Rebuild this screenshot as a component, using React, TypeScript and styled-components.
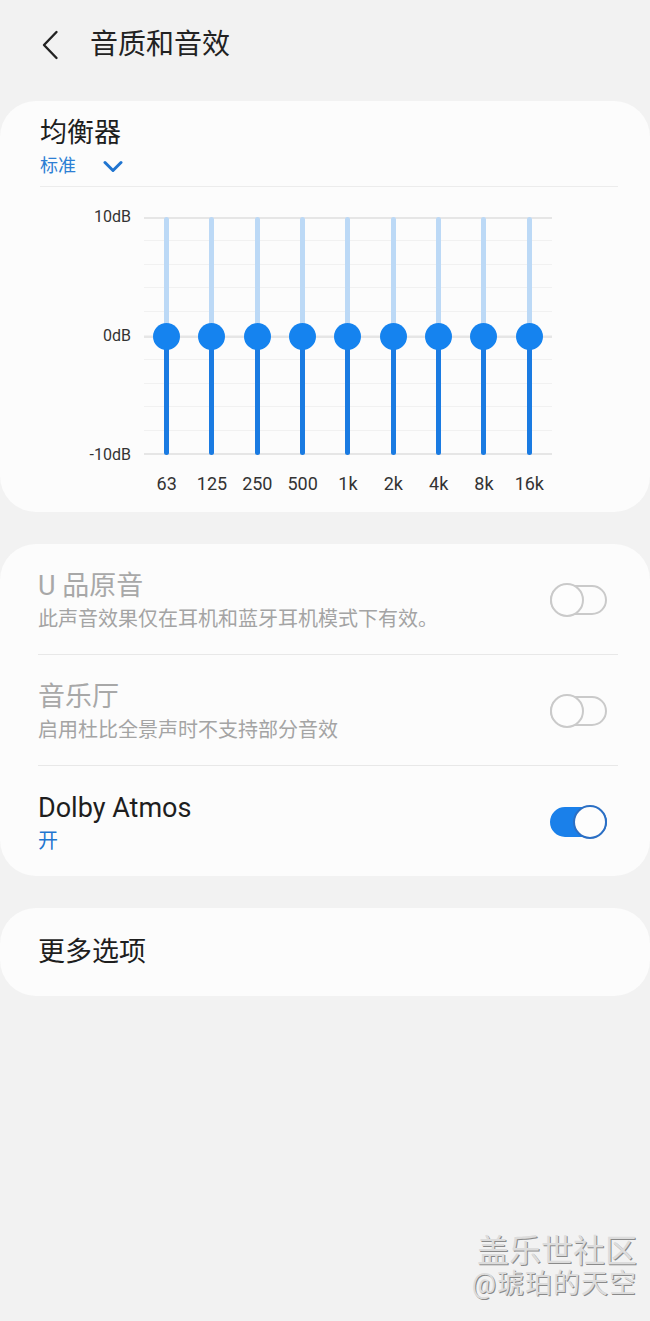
import styled, { createGlobalStyle } from 'styled-components';

const GlobalStyle = createGlobalStyle`
	html, body {
		margin: 0;
		padding: 0;
		background: #f2f2f2;
	}
	body {
		font-family: Roboto, "Noto Sans CJK SC", sans-serif;
		color: #222;
	}
`;

const Page = styled.div`
	position: relative;
	width: 650px;
	min-height: 1321px;
	background: #f2f2f2;
	overflow: hidden;
`;

const Header = styled.div`
	display: flex;
	align-items: center;
	height: 90px;
	padding-left: 41px;
	gap: 31px;
`;

const HeaderTitle = styled.div`
	font-size: 28px;
	line-height: 36px;
	color: #222;
`;

const Cards = styled.div`
	display: flex;
	flex-direction: column;
	gap: 32px;
	margin-top: 11px;
`;

const Card = styled.div<{ $padLeft?: number }>`
	background: #fcfcfc;
	border-radius: 36px;
	padding: 0 32px 0 ${(p) => p.$padLeft ?? 38}px;
`;

const EqHead = styled.div`
	padding-top: 15px;
	padding-bottom: 9px;
	border-bottom: 1px solid #ececec;
`;

const CardTitle = styled.div<{ $muted?: boolean }>`
	font-size: 27px;
	line-height: 34px;
	color: ${(p) => (p.$muted ? '#a8a8a8' : '#1e1e1e')};
`;

const PresetRow = styled.div`
	display: flex;
	align-items: center;
	gap: 27px;
	margin-top: 5px;
	font-size: 18px;
	line-height: 22px;
	color: #2d7fd4;
`;

const Chart = styled.div`
	display: grid;
	grid-template-columns: 91px 408px;
	column-gap: 13px;
	padding-top: 30px;
	padding-bottom: 18px;
`;

const Axis = styled.div`
	display: flex;
	flex-direction: column;
	justify-content: space-between;
	align-items: flex-end;
	height: 258px;
	margin: -10px 0;
	font-size: 16px;
	line-height: 20px;
	color: #333;
`;

const Plot = styled.div`
	display: grid;
	grid-template-columns: repeat(9, 1fr);
	height: 238px;
	background:
		linear-gradient(#e6e6e6, #e6e6e6) 0 0 / 100% 2px no-repeat,
		linear-gradient(#e6e6e6, #e6e6e6) 0 119px / 100% 2px no-repeat,
		linear-gradient(#e6e6e6, #e6e6e6) 0 236px / 100% 2px no-repeat,
		repeating-linear-gradient(
			to bottom,
			transparent 0,
			transparent 22.8px,
			#f1f1f1 22.8px,
			#f1f1f1 23.8px
		);
`;

const Band = styled.div`
	position: relative;
	display: flex;
	flex-direction: column;
	align-items: center;
`;

const Track = styled.div<{ $active?: boolean }>`
	flex: 1;
	width: 5px;
	border-radius: 3px;
	background: ${(p) => (p.$active ? '#1a7be2' : '#bcd9f6')};
`;

const Knob = styled.div`
	position: absolute;
	top: 50%;
	left: 50%;
	width: 27px;
	height: 27px;
	margin: -13.5px 0 0 -13.5px;
	border-radius: 50%;
	background: #1583ef;
`;

const FreqRow = styled.div`
	grid-column: 2;
	display: grid;
	grid-template-columns: repeat(9, 1fr);
	margin-top: 19px;
	font-size: 18px;
	line-height: 20px;
	color: #333;
	text-align: center;
`;

const Row = styled.div<{ $last?: boolean }>`
	display: flex;
	align-items: center;
	justify-content: space-between;
	padding: 25px 11px 23px 0;
	border-bottom: ${(p) => (p.$last ? 'none' : '1px solid #e8e8e8')};
`;

const RowText = styled.div`
	display: flex;
	flex-direction: column;
	gap: 4px;
`;

const SubText = styled.div<{ $accent?: boolean }>`
	font-size: 20px;
	line-height: 24px;
	color: ${(p) => (p.$accent ? '#1f76d0' : '#a4a4a4')};
`;

const Toggle = styled.div<{ $on?: boolean }>`
	position: relative;
	width: 57px;
	height: 30px;
	box-sizing: border-box;
	border-radius: 15px;
	border: 2px solid ${(p) => (p.$on ? '#1a80ea' : '#cacaca')};
	background: ${(p) => (p.$on ? '#1a80ea' : 'transparent')};
`;

const Thumb = styled.div<{ $on?: boolean }>`
	position: absolute;
	top: -4px;
	${(p) => (p.$on ? 'right: -2px;' : 'left: -2px;')}
	width: 34px;
	height: 34px;
	box-sizing: border-box;
	border-radius: 50%;
	background: #fdfdfd;
	border: 2px solid ${(p) => (p.$on ? '#2b6fc4' : '#cacaca')};
`;

const MoreRow = styled.div`
	padding: 27px 0;
`;

const Watermark = styled.div`
	position: absolute;
	right: 13px;
	bottom: 21px;
	display: flex;
	flex-direction: column;
	align-items: flex-end;
	gap: 0;
	color: #dcdcdc;
	text-shadow: 1px 1px 0 #8a8a8a;
`;

const WatermarkLine = styled.div<{ $size: number }>`
	font-size: ${(p) => p.$size}px;
	line-height: ${(p) => p.$size + 4}px;
	letter-spacing: ${(p) => (p.$size > 30 ? 0 : 1)}px;
`;

const bands = ['63', '125', '250', '500', '1k', '2k', '4k', '8k', '16k'];

const BackIcon = () => (
	<svg width="18" height="30" viewBox="0 0 18 30" fill="none">
		<path
			d="M15.5 2 L3 15 L15.5 28"
			stroke="#222"
			strokeWidth="2.4"
			strokeLinecap="round"
			strokeLinejoin="round"
		/>
	</svg>
);

const ChevronDown = () => (
	<svg width="20" height="13" viewBox="0 0 20 13" fill="none">
		<path
			d="M2 2.5 L10 10.5 L18 2.5"
			stroke="#1f74d0"
			strokeWidth="3"
			strokeLinecap="round"
			strokeLinejoin="round"
		/>
	</svg>
);

const SettingRow = ({
	title,
	sub,
	on,
	muted,
	last,
}: {
	title: string;
	sub: string;
	on?: boolean;
	muted?: boolean;
	last?: boolean;
}) => (
	<Row $last={last}>
		<RowText>
			<CardTitle $muted={muted}>{title}</CardTitle>
			<SubText $accent={on}>{sub}</SubText>
		</RowText>
		<Toggle $on={on}>
			<Thumb $on={on} />
		</Toggle>
	</Row>
);

const App = () => {
	return (
		<Page>
			<GlobalStyle />
			<Header>
				<BackIcon />
				<HeaderTitle>音质和音效</HeaderTitle>
			</Header>
			<Cards>
				<Card $padLeft={40}>
					<EqHead>
						<CardTitle>均衡器</CardTitle>
						<PresetRow>
							标准
							<ChevronDown />
						</PresetRow>
					</EqHead>
					<Chart>
						<Axis>
							<span>10dB</span>
							<span>0dB</span>
							<span>-10dB</span>
						</Axis>
						<Plot>
							{bands.map((b) => (
								<Band key={b}>
									<Track />
									<Track $active />
									<Knob />
								</Band>
							))}
						</Plot>
						<FreqRow>
							{bands.map((b) => (
								<span key={b}>{b}</span>
							))}
						</FreqRow>
					</Chart>
				</Card>
				<Card>
					<SettingRow
						title="U 品原音"
						sub="此声音效果仅在耳机和蓝牙耳机模式下有效。"
						muted
					/>
					<SettingRow title="音乐厅" sub="启用杜比全景声时不支持部分音效" muted />
					<SettingRow title="Dolby Atmos" sub="开" on last />
				</Card>
				<Card>
					<MoreRow>
						<CardTitle>更多选项</CardTitle>
					</MoreRow>
				</Card>
			</Cards>
			<Watermark>
				<WatermarkLine $size={32}>盖乐世社区</WatermarkLine>
				<WatermarkLine $size={27}>@琥珀的天空</WatermarkLine>
			</Watermark>
		</Page>
	);
};

export default App;
